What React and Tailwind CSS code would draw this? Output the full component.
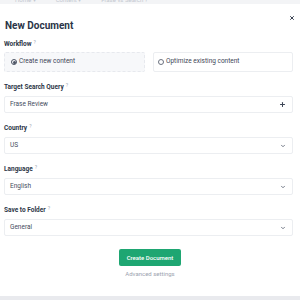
import { Plus, ChevronDown, X } from "lucide-react"

function Label({ children }) {
  return (
    <div className="flex items-start h-[10px] mb-[4px] text-[6.5px] leading-[10px] font-bold text-[#2d3748]">
      {children}
      <span className="ml-[2px] text-[5px] leading-[7px] font-normal text-[#9aa3b1]">?</span>
    </div>
  )
}

function Field({ label, value, icon }) {
  return (
    <div className="mt-[10px]">
      <Label>{label}</Label>
      <div className="h-[17px] flex items-center justify-between pl-[5px] pr-[6px] border border-[#eceef1] rounded-[2px] text-[6.5px] text-[#454d5e]">
        <span>{value}</span>
        {icon === "plus" ? (
          <Plus size={7} strokeWidth={3.5} className="text-[#3d4556]" />
        ) : (
          <ChevronDown size={6} strokeWidth={3} className="text-[#4a5263]" />
        )}
      </div>
    </div>
  )
}

export default function App() {
  return (
    <div
      className="w-[300px] h-[300px] flex flex-col bg-[#e9eaee] overflow-hidden"
      style={{ fontFamily: "Roboto, 'Liberation Sans', sans-serif" }}
    >
      <div className="h-[4px] flex items-end overflow-hidden bg-[#f3f4f6] text-[6px] leading-[8px] text-[#c3c8d0] pl-[15px] gap-[20px]">
        <span>Home ▾</span>
        <span>Content ▾</span>
        <span>Frase vs Search ?</span>
      </div>

      <div className="relative h-[292px] bg-white px-[4px]">
        <button className="absolute right-[2px] top-[8px] w-[12px] h-[12px] flex items-center justify-center rounded-full bg-white">
          <X size={6} strokeWidth={4} className="text-[#3a4252]" />
        </button>

        <h1 className="pt-[15px] pl-[1px] text-[10px] leading-[14px] font-bold text-[#2a3447]">
          New Document
        </h1>

        <div className="mt-[6px]">
          <div className="flex items-start h-[10px] mb-[3px] text-[6.5px] leading-[10px] font-bold text-[#2d3748]">
            Workflow
            <span className="ml-[2px] text-[5px] leading-[7px] font-normal text-[#9aa3b1]">?</span>
          </div>
          <div className="flex gap-[8px]">
            <div className="w-[141px] h-[20px] flex items-center gap-[2px] px-[6px] bg-[#f7f8fa] border border-dashed border-[#e7e9ee] rounded-[2px] text-[6.5px] text-[#3d4556]">
              <span className="w-[6px] h-[6px] rounded-full border border-[#4b5363] flex items-center justify-center">
                <span className="w-[3px] h-[3px] rounded-full bg-[#4b5363]" />
              </span>
              Create new content
            </div>
            <div className="w-[140px] h-[20px] flex items-center gap-[2px] px-[4px] bg-white border border-[#eceef1] rounded-[2px] text-[6.5px] text-[#3d4556]">
              <span className="w-[6px] h-[6px] rounded-full border border-[#6b7280]" />
              Optimize existing content
            </div>
          </div>
        </div>

        <div className="w-[289px] mt-[1px]">
          <Field label="Target Search Query" value="Frase Review" icon="plus" />
          <Field label="Country" value="US" />
          <Field label="Language" value="English" />
          <Field label="Save to Folder" value="General" />
        </div>

        <div className="flex flex-col items-center mt-[13px]">
          <button className="w-[62px] h-[17px] rounded-[2px] bg-[#1ea672] text-white text-[6px] font-medium">
            Create Document
          </button>
          <span className="mt-[3px] text-[6px] leading-[10px] text-[#9ca3af]">Advanced settings</span>
        </div>
      </div>
    </div>
  )
}
